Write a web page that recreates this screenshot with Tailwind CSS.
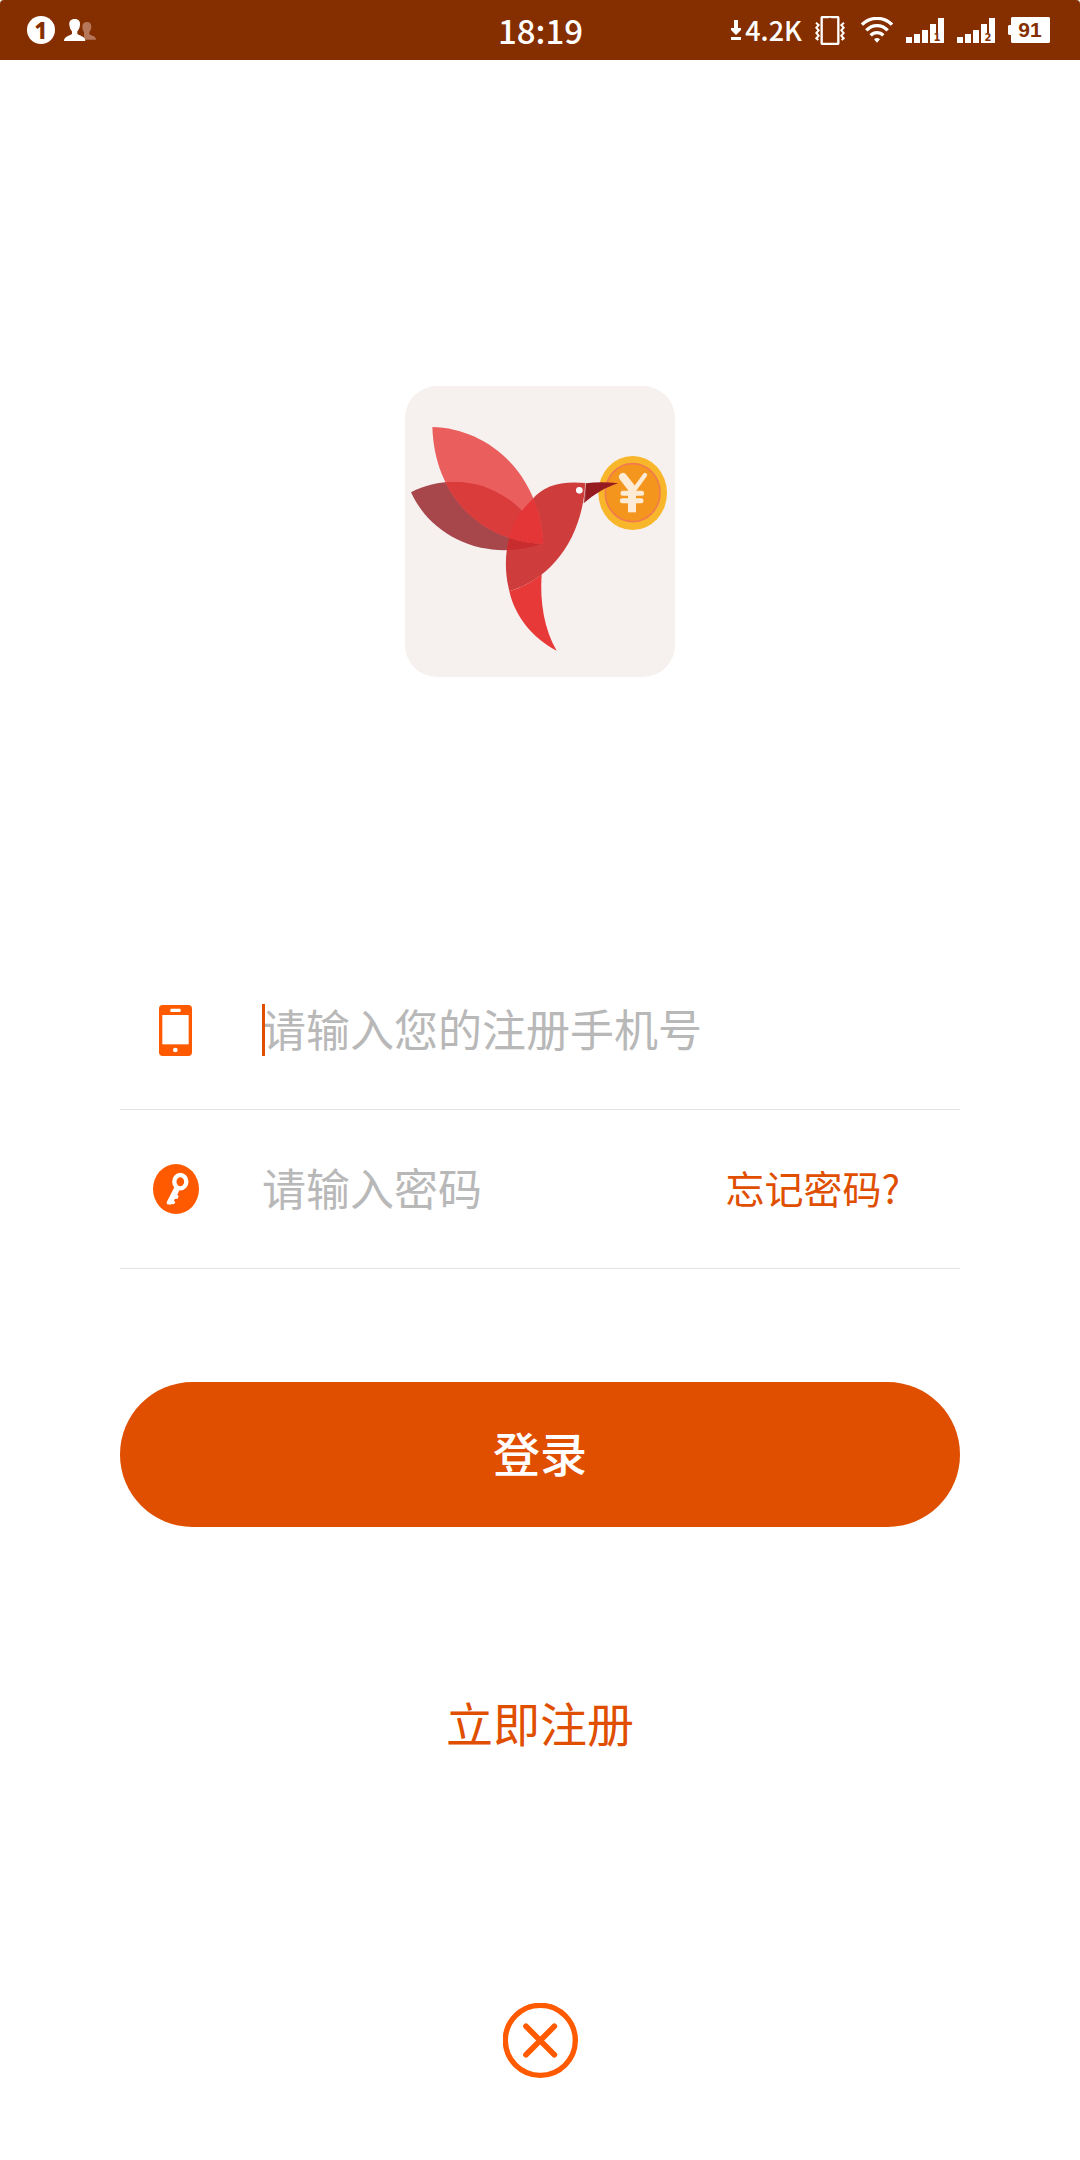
<!DOCTYPE html>
<html lang="zh-CN">
  <head>
    <meta charset="UTF-8" />
    <meta name="viewport" content="width=device-width, initial-scale=1.0" />
    <title>登录</title>
    <script src="https://cdn.jsdelivr.net/npm/@tailwindcss/browser@4"></script>
  </head>
  <body class="min-h-screen bg-white font-['Noto_Sans_CJK_SC',sans-serif]">
    <!-- Status bar -->
    <header
      class="grid h-[60px] grid-cols-[1fr_auto_1fr] items-center rounded-t-[4px] bg-[#852f00] pl-[27px] pr-[30px] font-medium text-white"
    >
      <div class="flex items-center gap-[9px]">
        <span
          class="flex size-7 items-center justify-center rounded-full bg-white font-['Noto_Sans'] text-[23px] leading-7 font-extrabold text-[#852f00]"
          >1</span
        >
        <svg class="h-[22px] w-8" viewBox="0 0 96 66" aria-hidden="true">
          <path d="M69 9c9 0 13 6 13 14 0 7-3 12-6 16v6c3 5 20 5 20 17H60V39c-3-4-5-9-5-16 0-8 5-14 14-14z" fill="#b5765a" />
          <path d="M32 0c12 0 17 7 16 17-1 10-4 15-8 20v7c4 7 24 5 24 22H0c0-17 20-15 24-22v-7c-4-5-7-10-8-20C15 7 20 0 32 0z" fill="#fff" />
        </svg>
      </div>
      <time class="pl-1 text-[33px] leading-[60px]">18:19</time>
      <div class="flex items-center justify-end gap-[13px]">
        <div class="flex items-center gap-1">
          <svg class="h-5 w-[10px]" viewBox="0 0 10 20" fill="#fff" aria-hidden="true">
            <path d="M3 0h4v8h3v2l-5 5-5-5V8h3zM0 17h10v3H0z" />
          </svg>
          <span class="text-[27px] leading-[60px]">4.2K</span>
        </div>
        <svg class="mr-[3px] h-[29px] w-[30px]" viewBox="0 0 90 87" fill="none" stroke="#fff" aria-hidden="true">
          <rect x="20" y="3" width="50" height="81" rx="3" stroke-width="7" />
          <path d="M41 7h8" stroke="#852f00" stroke-width="3" />
          <path d="M3 20l8 7-7 8 7 8-7 8 7 8-7 8 6 5M87 20l-8 7 7 8-7 8 7 8-7 8 7 8-6 5" stroke-width="6" />
        </svg>
        <svg class="h-[26px] w-8" viewBox="0 0 96 78" fill="none" stroke="#fff" aria-hidden="true">
          <path d="M3 23C28-2 68-2 93 23" stroke-width="10" />
          <path d="M16 40c18-19 46-19 64 0" stroke-width="10" />
          <path d="M29 55c11-11 27-11 38 0" stroke-width="10" />
          <path d="M39 67c6-5 12-5 18 0L48 77z" fill="#fff" stroke="none" />
        </svg>
        <svg class="h-[25px] w-[38px]" viewBox="0 0 38 25" fill="#fff" aria-hidden="true">
          <path d="M0 19h6v6H0zM8 16h6v9H8zM16 12h6v13h-6zM24 6h6v9h2V0h6v25H24z" />
          <text x="31" y="23" text-anchor="middle" font-family="DejaVu Sans" font-size="10" font-weight="700" fill="#852f00">1</text>
        </svg>
        <svg class="h-[25px] w-[38px]" viewBox="0 0 38 25" fill="#fff" aria-hidden="true">
          <path d="M0 19h6v6H0zM8 16h6v9H8zM16 12h6v13h-6zM24 6h6v9h2V0h6v25H24z" />
          <text x="31" y="23" text-anchor="middle" font-family="DejaVu Sans" font-size="10" font-weight="700" fill="#852f00">2</text>
        </svg>
        <svg class="h-[26px] w-[42px]" viewBox="0 0 42 26" fill="#fff" aria-hidden="true">
          <path d="M4 0h37l1 1v24l-1 1H4l-1-1v-7H1l-1-1V9l1-1h2V1z" />
          <text x="22" y="20" text-anchor="middle" font-family="Liberation Sans" font-size="21" font-weight="700" fill="#852f00">91</text>
        </svg>
      </div>
    </header>

    <main class="flex flex-col items-center px-[120px] pb-20 pt-[326px]">
      <!-- Logo -->
      <svg class="h-[291px] w-[270px]" viewBox="30 33 810 873" role="img" aria-label="logo">
        <defs>
          <path id="body" d="M571 324C500 317 446 331 411 374C350 428 321 519 337 620L343 649C470 611 562 490 571 324z" />
          <path id="back-wing" d="M48 352C181 281 371 328 443 505C291 561 116 500 48 352z" />
          <path id="front-wing" d="M112 156C278 160 434 293 445 506C270 502 119 374 112 156z" />
          <clipPath id="in-body"><use href="#body" /></clipPath>
          <clipPath id="in-back-wing"><use href="#back-wing" /></clipPath>
        </defs>
        <rect x="30" y="33" width="810" height="873" rx="96" fill="#f6f1ef" />
        <ellipse cx="713" cy="354" rx="103" ry="111" fill="#f8b62b" />
        <ellipse cx="713" cy="353" rx="82" ry="87" fill="#f4961e" stroke="#f17b4d" stroke-width="5" />
        <g fill="none" stroke="#fdebd5" stroke-linecap="round" stroke-linejoin="round">
          <path d="M684 306l28 36" stroke-width="24" />
          <path d="M750 300l-32 44" stroke-width="13" />
          <path d="M684 355h56M682 377h56" stroke-width="15" />
          <path d="M711 350v50" stroke-width="24" stroke-linecap="square" />
        </g>
        <path d="M573 325C602 321 636 321 670 325C632 336 598 358 566 385z" fill="#961b21" />
        <path d="M440 597C434 682 448 763 485 827C412 790 359 722 343 649C380 638 412 621 440 597z" fill="#e83939" />
        <use href="#back-wing" fill="#a8474b" />
        <use href="#body" fill="#cf3c3c" />
        <use href="#back-wing" fill="#c82c2d" clip-path="url(#in-body)" />
        <use href="#front-wing" fill="#ea5f5d" />
        <use href="#front-wing" fill="#da3b3b" clip-path="url(#in-back-wing)" />
        <use href="#front-wing" fill="#e43637" clip-path="url(#in-body)" />
        <circle cx="553" cy="346" r="10" fill="#fff" />
        <path d="M571 326l-2 54" stroke="#d88787" stroke-width="2" />
      </svg>

      <!-- Login form -->
      <form class="mt-[274px] flex w-full flex-col">
        <div class="flex h-[159px] items-center border-b border-[#e3e3e3]">
          <label for="phone" class="mr-[30px] flex w-28 justify-center" aria-label="手机号">
            <svg class="h-[51px] w-[34px]" viewBox="0 0 102 153" aria-hidden="true">
              <rect width="99" height="153" rx="11" fill="#ff5a00" />
              <path d="M10 30h79v88H10z" fill="#fff" />
              <rect x="34" y="11" width="31" height="10" rx="3" fill="#fff" />
              <circle cx="49" cy="135" r="7" fill="#fff" />
            </svg>
          </label>
          <div class="relative flex-1">
            <span class="absolute left-0 top-1/2 h-[52px] w-[3px] -translate-y-1/2 bg-[#e04e00]"></span>
            <input
              id="phone"
              type="tel"
              placeholder="请输入您的注册手机号"
              class="block w-full bg-transparent pb-1 text-[44px] leading-[66px] caret-[#e04e00] outline-none placeholder:text-[#b8b8b8]"
            />
          </div>
        </div>
        <div class="flex h-[159px] items-center border-b border-[#e3e3e3] pr-[60px]">
          <label for="password" class="mr-[30px] flex w-28 justify-center" aria-label="密码">
            <svg class="h-[50px] w-[46px]" viewBox="0 0 138 150" aria-hidden="true">
              <ellipse cx="69" cy="75" rx="69" ry="75" fill="#ff5a00" />
              <ellipse cx="82" cy="53" rx="18" ry="20" fill="none" stroke="#fff" stroke-width="13" />
              <path d="M64 70l15 9-6 13 4 5-3 7-9 1-2 5 4 5-4 6-7-1-3 2-11-1-1-6z" fill="#fff" />
            </svg>
          </label>
          <input
            id="password"
            type="password"
            placeholder="请输入密码"
            class="block w-0 flex-1 bg-transparent pb-1 text-[44px] leading-[66px] outline-none placeholder:text-[#b8b8b8]"
          />
          <a href="#" class="pb-1 text-[39px] leading-[60px] text-[#e04e00]">忘记密码?</a>
        </div>
        <button
          type="submit"
          class="mt-[113px] h-[145px] w-full rounded-full bg-[#e04e00] pb-1 text-[47px] font-medium text-white"
        >
          登录
        </button>
      </form>

      <a href="#" class="mt-[165px] text-[47px] leading-[60px] text-[#e04e00]">立即注册</a>

      <button type="button" class="mt-[251px]" aria-label="关闭">
        <svg class="size-[75px]" viewBox="0 0 225 225" fill="none" stroke="#ff5a00" aria-hidden="true">
          <circle cx="112" cy="112" r="105" stroke-width="16" />
          <path d="M69 70l85 85M154 70l-85 85" stroke-width="17" stroke-linecap="round" />
        </svg>
      </button>
    </main>
  </body>
</html>
